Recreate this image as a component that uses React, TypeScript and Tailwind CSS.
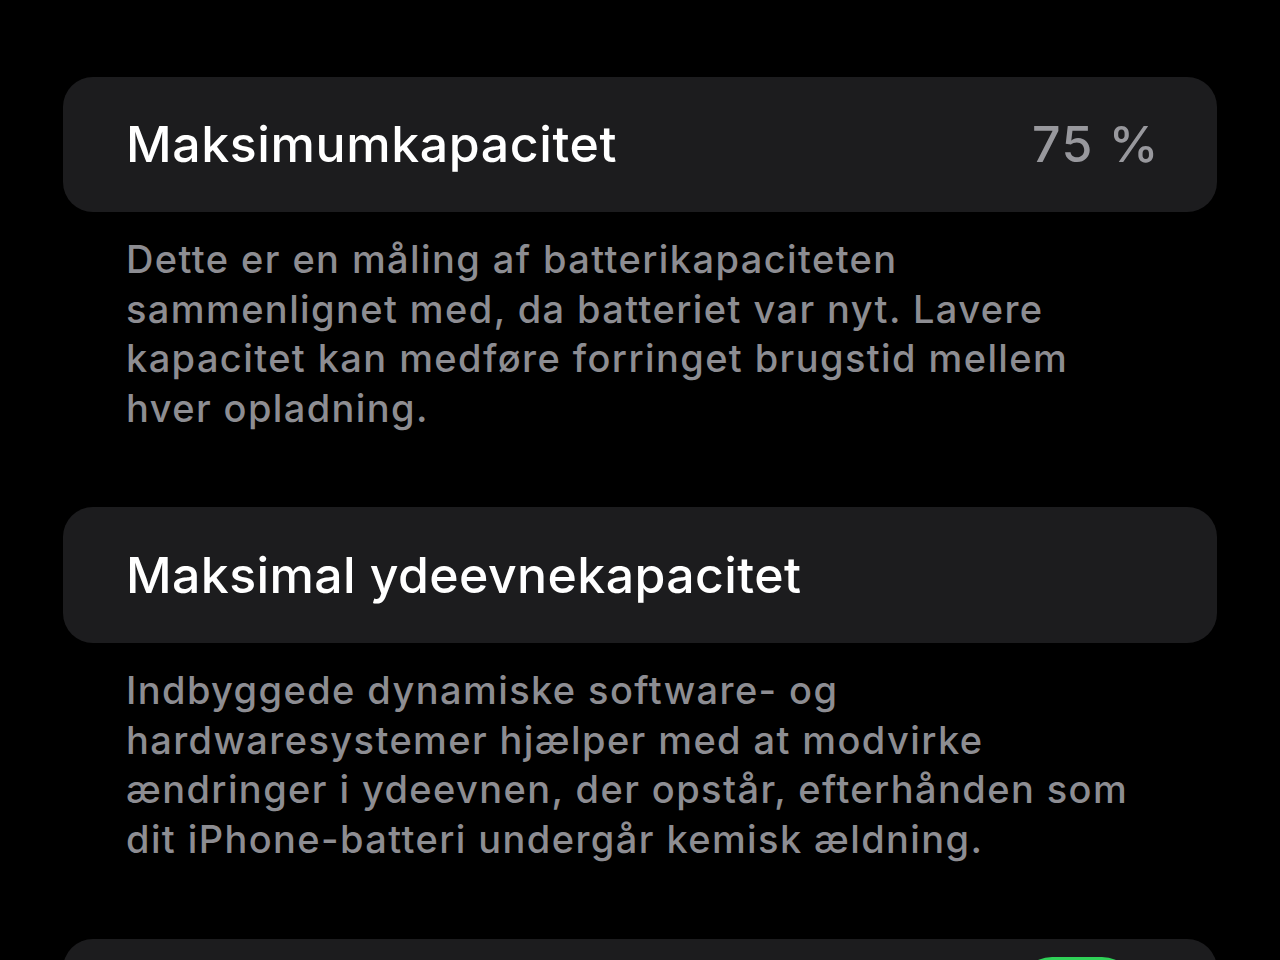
export default function App() {
  return (
    <div className="min-h-screen h-[960px] overflow-hidden bg-black px-[63px] pt-[77px] font-['Inter','Liberation_Sans',sans-serif] antialiased">
      <section className="flex h-[135px] items-center justify-between rounded-[30px] bg-[#1c1c1e] pl-[63px] pr-[57px]">
        <h2 className="text-[50px] font-medium tracking-[0.6px] text-white">Maksimumkapacitet</h2>
        <span className="text-[50px] font-medium tracking-[1.5px] text-[#98989d]">75 %</span>
      </section>
      <p className="mt-[23px] pl-[63px] text-[38px] font-medium leading-[49.5px] tracking-[1.4px] text-[#8d8d92]">
        <span className="block">Dette er en måling af batterikapaciteten</span>
        <span className="block">sammenlignet med, da batteriet var nyt. Lavere</span>
        <span className="block">kapacitet kan medføre forringet brugstid mellem</span>
        <span className="block">hver opladning.</span>
      </p>

      <section className="mt-[74px] flex h-[136px] items-center rounded-[30px] bg-[#1c1c1e] pl-[63px]">
        <h2 className="text-[50px] font-medium tracking-[0.4px] text-white">Maksimal ydeevnekapacitet</h2>
      </section>
      <p className="mt-[23px] pl-[63px] text-[38px] font-medium leading-[49.5px] tracking-[1.4px] text-[#8d8d92]">
        <span className="block">Indbyggede dynamiske software- og</span>
        <span className="block">hardwaresystemer hjælper med at modvirke</span>
        <span className="block">ændringer i ydeevnen, der opstår, efterhånden som</span>
        <span className="block">dit iPhone-batteri undergår kemisk ældning.</span>
      </p>

      {/* next row, cut off at the bottom edge */}
      <section className="mt-[75px] flex h-[135px] items-start justify-end rounded-[30px] bg-[#1c1c1e] pr-[80px] pt-[18px]">
        <div className="h-[70px] w-[120px] rounded-full bg-[#30d158]" />
      </section>
    </div>
  );
}
